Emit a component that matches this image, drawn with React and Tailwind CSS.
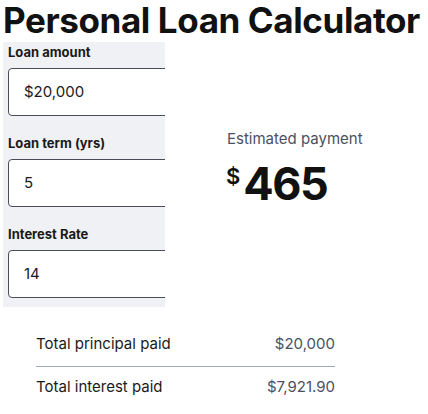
const font = { fontFamily: "Inter, 'Liberation Sans', sans-serif" };

const Field = ({ label, value }) => (
  <div className="flex flex-col">
    <label className="text-[13px] font-bold text-[#1a1a1a] leading-[20px] h-[20px]">
      {label}
    </label>
    <div className="mt-[6px] w-[200px] h-[48px] flex items-center pl-[15px] border border-[#4a4d57] rounded-[4px] bg-white text-[15px] text-[#1a1a1a]">
      {value}
    </div>
  </div>
);

export default function App() {
  return (
    <div className="w-[428px] h-[414px] bg-white overflow-hidden" style={font}>
      <h1 className="pl-[3px] h-[42px] text-[35px] leading-[40px] font-bold tracking-[-0.4px] text-[#111] whitespace-nowrap">
        Personal Loan Calculator
      </h1>

      <div className="flex">
        <div className="ml-[3px] w-[162px] h-[265px] overflow-hidden bg-[#f0f1f5] pl-[5px] flex flex-col gap-[17px]">
          <Field label="Loan amount" value="$20,000" />
          <Field label="Loan term (yrs)" value="5" />
          <Field label="Interest Rate" value="14" />
        </div>

        <div className="flex-1 flex flex-col items-start pl-[62px] pt-[88px]">
          <p className="text-[15px] leading-[18px] text-[#4b5060]">Estimated payment</p>
          <div className="mt-[16px] flex items-start">
            <span className="text-[22px] font-semibold leading-[22px] text-[#111] mt-[1px] -ml-[1px]">$</span>
            <span className="ml-[3px] text-[45px] font-bold leading-[40px] text-[#111] tracking-[-1.5px]">
              465
            </span>
          </div>
        </div>
      </div>

      <div className="ml-[36px] w-[299px] mt-[23px] text-[15px] leading-[24px]">
        <div className="flex justify-between pt-[2px] pb-[10px] border-b border-[#a3a8b6]">
          <span className="text-[#1a1a1a]">Total principal paid</span>
          <span className="text-[#4b5060]">$20,000</span>
        </div>
        <div className="flex justify-between pt-[8px]">
          <span className="text-[#1a1a1a]">Total interest paid</span>
          <span className="text-[#4b5060]">$7,921.90</span>
        </div>
      </div>
    </div>
  );
}
